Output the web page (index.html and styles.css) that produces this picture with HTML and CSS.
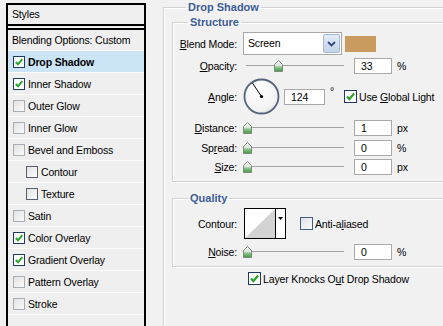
FILE: index.html
```html
<!DOCTYPE html>
<html lang="en">
<head>
    <meta charset="UTF-8">
    <title>Layer Style</title>
    <link rel="stylesheet" href="styles.css">
</head>
<body>
    <svg class="defs" width="0" height="0">
        <defs>
            <linearGradient id="thumb-fill" x1="0" y1="0" x2="0" y2="1">
                <stop offset="0" stop-color="#f4f6f4"/>
                <stop offset="0.45" stop-color="#dfe6df"/>
                <stop offset="0.6" stop-color="#8fc48f"/>
                <stop offset="1" stop-color="#3f9a3f"/>
            </linearGradient>
            <radialGradient id="dial-fill" cx="0.4" cy="0.35" r="0.7">
                <stop offset="0" stop-color="#ffffff"/>
                <stop offset="0.8" stop-color="#f3f3f3"/>
                <stop offset="1" stop-color="#dcdcdc"/>
            </radialGradient>
        </defs>
    </svg>

    <div class="window">
        <!-- left list of effects -->
        <div class="styles-panel">
            <div class="panel-head">Styles</div>
            <div class="style-row plain">Blending Options: Custom</div>
            <div class="style-row selected"><span class="check on"><svg viewBox="0 0 10 10"><path d="M1.8 5 L4 7.3 L8.3 2.2"/></svg></span><b>Drop Shadow</b></div>
            <div class="style-row"><span class="check on"><svg viewBox="0 0 10 10"><path d="M1.8 5 L4 7.3 L8.3 2.2"/></svg></span>Inner Shadow</div>
            <div class="style-row"><span class="check"></span>Outer Glow</div>
            <div class="style-row"><span class="check"></span>Inner Glow</div>
            <div class="style-row"><span class="check"></span>Bevel and Emboss</div>
            <div class="style-row sub"><span class="check dark"></span>Contour</div>
            <div class="style-row sub"><span class="check dark"></span>Texture</div>
            <div class="style-row"><span class="check"></span>Satin</div>
            <div class="style-row"><span class="check on"><svg viewBox="0 0 10 10"><path d="M1.8 5 L4 7.3 L8.3 2.2"/></svg></span>Color Overlay</div>
            <div class="style-row"><span class="check on"><svg viewBox="0 0 10 10"><path d="M1.8 5 L4 7.3 L8.3 2.2"/></svg></span>Gradient Overlay</div>
            <div class="style-row"><span class="check"></span>Pattern Overlay</div>
            <div class="style-row"><span class="check"></span>Stroke</div>
        </div>

        <!-- right options -->
        <div class="options">
            <fieldset class="group outer">
                <legend>Drop Shadow</legend>

                <fieldset class="group inner">
                    <legend>Structure</legend>

                    <div class="row row-blend">
                        <span class="lbl"><u>B</u>lend Mode:</span>
                        <div class="select">
                            <span class="select-text">Screen</span>
                            <span class="select-btn"><svg width="9" height="6" viewBox="0 0 9 6"><path d="M1 1 L4.5 4.5 L8 1"/></svg></span>
                        </div>
                        <span class="swatch"></span>
                    </div>

                    <div class="row row-opacity">
                        <span class="lbl"><u>O</u>pacity:</span>
                        <div class="slider"><svg class="thumb" style="left: 31px" width="9" height="12" viewBox="0 0 9 12"><path d="M4.5 0.5 L8.5 4.5 V11.5 H0.5 V4.5 Z"/></svg></div>
                        <span class="field">33</span>
                        <span class="unit">%</span>
                    </div>

                    <div class="row row-angle">
                        <span class="lbl"><u>A</u>ngle:</span>
                        <svg class="dial" width="37" height="37" viewBox="0 0 37 37">
                            <circle cx="18.5" cy="18.5" r="17" fill="url(#dial-fill)" stroke="#56647c" stroke-width="1.8"/>
                            <line x1="18.5" y1="18.5" x2="9.4" y2="5" stroke="#000" stroke-width="1"/>
                            <circle cx="18.5" cy="18.5" r="1.6" fill="#000"/>
                        </svg>
                        <span class="field wide">124</span>
                        <span class="unit deg">°</span>
                        <span class="check big on"><svg viewBox="0 0 10 10"><path d="M1.8 5 L4 7.3 L8.3 2.2"/></svg></span>
                        <span class="cb-text">Use <u>G</u>lobal Light</span>
                    </div>

                    <div class="row row-distance">
                        <span class="lbl"><u>D</u>istance:</span>
                        <div class="slider"><svg class="thumb" style="left: 0px" width="9" height="12" viewBox="0 0 9 12"><path d="M4.5 0.5 L8.5 4.5 V11.5 H0.5 V4.5 Z"/></svg></div>
                        <span class="field">1</span>
                        <span class="unit">px</span>
                    </div>

                    <div class="row row-spread">
                        <span class="lbl">Sp<u>r</u>ead:</span>
                        <div class="slider"><svg class="thumb" style="left: 0px" width="9" height="12" viewBox="0 0 9 12"><path d="M4.5 0.5 L8.5 4.5 V11.5 H0.5 V4.5 Z"/></svg></div>
                        <span class="field">0</span>
                        <span class="unit">%</span>
                    </div>

                    <div class="row row-size">
                        <span class="lbl"><u>S</u>ize:</span>
                        <div class="slider"><svg class="thumb" style="left: 0px" width="9" height="12" viewBox="0 0 9 12"><path d="M4.5 0.5 L8.5 4.5 V11.5 H0.5 V4.5 Z"/></svg></div>
                        <span class="field">0</span>
                        <span class="unit">px</span>
                    </div>
                </fieldset>

                <fieldset class="group inner quality">
                    <legend>Quality</legend>

                    <div class="row row-contour">
                        <span class="lbl">Contour:</span>
                        <div class="contour">
                            <svg width="30" height="29" viewBox="0 0 30 29">
                                <rect width="30" height="29" fill="#fff"/>
                                <path d="M0 29 L30 0 V29 Z" fill="#d3d3d3"/>
                            </svg>
                            <span class="contour-btn"><svg width="5" height="3" viewBox="0 0 5 3"><path d="M0 0 H5 L2.5 3 Z"/></svg></span>
                        </div>
                        <span class="check big"></span>
                        <span class="cb-text">Anti-a<u>l</u>iased</span>
                    </div>

                    <div class="row row-noise">
                        <span class="lbl"><u>N</u>oise:</span>
                        <div class="slider"><svg class="thumb" style="left: 0px" width="9" height="12" viewBox="0 0 9 12"><path d="M4.5 0.5 L8.5 4.5 V11.5 H0.5 V4.5 Z"/></svg></div>
                        <span class="field">0</span>
                        <span class="unit">%</span>
                    </div>
                </fieldset>

                <div class="row row-knock">
                    <span class="check big on"><svg viewBox="0 0 10 10"><path d="M1.8 5 L4 7.3 L8.3 2.2"/></svg></span>
                    <span class="cb-text">Layer Knocks O<u>u</u>t Drop Shadow</span>
                </div>
            </fieldset>
        </div>
    </div>
</body>
</html>
```

FILE: styles.css
```css
body{
    margin: 0;
    background-color: #f1f1f1;
    font-family: "Liberation Sans", Arial, sans-serif;
    font-size: 10.5px;
    letter-spacing: -0.15px;
    color: #000;
    overflow: hidden;
}
.defs{
    position: absolute;
}
.window{
    display: flex;
    height: 326px;
    overflow: hidden;
}

/* effects list */
.styles-panel{
    box-sizing: border-box;
    width: 140px;
    height: 340px;
    margin: 3px 0 0 6px;
    border: 2px solid #000;
    border-bottom: none;
    background-color: #efefef;
    flex-shrink: 0;
}
.panel-head{
    height: 19px;
    line-height: 19px;
    padding-left: 4px;
    border-bottom: 6px double #000;
}
.style-row{
    display: flex;
    align-items: center;
    height: 21px;
    padding-left: 5px;
    border-bottom: 1px solid #fbfbfb;
}
.style-row.plain{
    height: 20px;
    padding-left: 4px;
}
.style-row.sub{
    padding-left: 18px;
}
.style-row.selected{
    background-color: #cbe5f6;
}
.style-row b{
    font-weight: bold;
}

/* checkboxes */
.check{
    box-sizing: border-box;
    width: 12px;
    height: 12px;
    margin-right: 3px;
    border: 1px solid #a9aeb5;
    background: linear-gradient(135deg, #e2e2e2, #fbfbfb);
    flex-shrink: 0;
    display: flex;
}
.check.dark{
    border-color: #55606e;
}
.check.on{
    border-color: #1e3a66;
    background: #fff;
}
.check svg{
    width: 10px;
    height: 10px;
}
.check path{
    fill: none;
    stroke: #2aa52a;
    stroke-width: 2;
}
.check.big{
    width: 13px;
    height: 13px;
    margin-right: 2px;
    border-color: #3f5f86;
}
.check.big.on{
    border-color: #1e3a66;
}
.check.big svg{
    width: 11px;
    height: 11px;
}

/* option groups */
.options{
    margin-left: 17px;
    min-width: 0;
    flex: 1;
}
.group{
    margin: 0;
    padding: 0;
    min-width: 0;
    border: 1px solid #d2d2d2;
    box-shadow: inset 1px 1px 0 #fff, 1px 1px 0 #fff;
}
.group legend{
    padding: 0 2px;
    line-height: 13px;
    font-size: 11px;
    font-weight: bold;
    letter-spacing: 0;
    color: #3d5c97;
}
.outer{
    width: 320px;
    height: 340px;
    margin-top: 1px;
    padding-left: 8px;
}
.outer > legend{
    margin-left: 14px;
}
.inner{
    margin-top: 2px;
    padding-bottom: 6px;
}
.inner > legend{
    margin-left: 15px;
}
.inner.quality{
    margin-top: 10px;
}

/* rows */
.row{
    display: flex;
    align-items: center;
}
.lbl{
    width: 64px;
    margin-right: 6px;
    text-align: right;
    flex-shrink: 0;
}
.row-blend{
    height: 23px;
    margin-top: 3px;
}
.row-opacity{
    height: 16px;
    margin-top: 3px;
}
.row-angle{
    height: 37px;
    margin-top: 4px;
}
.row-distance{
    height: 16px;
    margin-top: 5px;
}
.row-spread{
    height: 16px;
    margin-top: 4px;
}
.row-size{
    height: 16px;
    margin-top: 3px;
}
.row-contour{
    height: 31px;
    margin-top: 3px;
}
.row-noise{
    height: 16px;
    margin-top: 5px;
}
.row-knock{
    height: 13px;
    margin-top: 5px;
    padding-left: 76px;
}

/* blend mode dropdown */
.select{
    box-sizing: border-box;
    display: flex;
    width: 99px;
    height: 23px;
    border: 1px solid #a7a7a7;
    background-color: #fff;
}
.select-text{
    flex: 1;
    padding-left: 4px;
    line-height: 21px;
}
.select-btn{
    box-sizing: border-box;
    width: 17px;
    margin: 1px;
    border: 1px solid #a6b9d6;
    border-radius: 2px;
    background: linear-gradient(#e4ecf7, #c3d3ea);
    display: flex;
    align-items: center;
    justify-content: center;
}
.select-btn path{
    fill: none;
    stroke: #2c4a7c;
    stroke-width: 1.8;
}
.swatch{
    width: 31px;
    height: 16px;
    margin-left: 3px;
    background-color: #c99b5e;
}

/* sliders */
.slider{
    position: relative;
    width: 102px;
    height: 16px;
    background: linear-gradient(#a3a3a3, #a3a3a3) no-repeat 3px 7px / 98px 1px;
}
.thumb{
    position: absolute;
    top: 2px;
}
.thumb path{
    fill: url(#thumb-fill);
    stroke: #7c8a7c;
    stroke-width: 1;
}
.field{
    box-sizing: border-box;
    width: 38px;
    height: 16px;
    margin-left: 9px;
    padding-left: 6px;
    border: 1px solid #a9a9a9;
    background-color: #fff;
    line-height: 14px;
}
.field.wide{
    width: 41px;
    margin-left: 4px;
}
.unit{
    margin-left: 5px;
}
.unit.deg{
    margin-left: 5px;
    margin-right: 10px;
    align-self: flex-start;
    margin-top: 7px;
}
.dial{
    display: block;
}
.cb-text{
    white-space: nowrap;
}

/* contour picker */
.contour{
    display: flex;
    margin-left: 1px;
    margin-right: 14px;
    border: 1px solid #000;
}
.contour svg{
    display: block;
}
.contour-btn{
    width: 9px;
    border-left: 1px solid #000;
    background-color: #fff;
    display: flex;
    justify-content: center;
    padding-top: 8px;
}
.contour-btn path{
    fill: #000;
}
```
